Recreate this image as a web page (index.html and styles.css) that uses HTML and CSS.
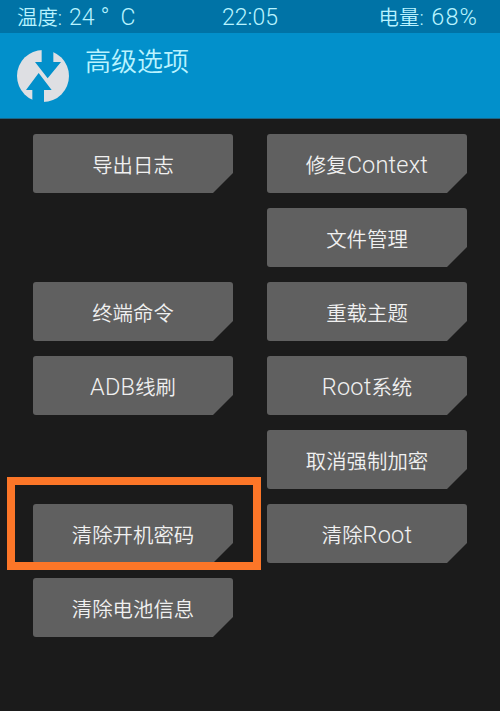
FILE: index.html
```html
<!DOCTYPE html>
<html lang="zh-CN">
<head>
    <meta charset="UTF-8">
    <meta name="viewport" content="width=device-width, initial-scale=1.0">
    <title>高级选项</title>
    <link rel="stylesheet" href="styles.css">
</head>
<body>
    <div class="status-bar">
        <span class="status-temp">温度: <span class="latin">24</span><span class="degree">°</span><span class="latin">C</span></span>
        <span class="status-time latin">22:05</span>
        <span class="status-battery">电量: <span class="latin percent">68%</span></span>
    </div>

    <div class="header">
        <svg class="logo" viewBox="0 0 156 156">
            <circle class="logo-disc" cx="78" cy="78" r="78"/>
            <!-- down arrow, then up arrow -->
            <path class="logo-arrow" d="M74 -2H109V36H132L92 85L54 36H74Z"/>
            <path class="logo-arrow" d="M65 69L104 120H81V158H46V120H27Z"/>
        </svg>
        <h1>高级选项</h1>
    </div>

    <div class="menu">
        <button class="btn left row-1">导出日志</button>
        <button class="btn right row-1">修复<span class="latin">Context</span></button>
        <button class="btn right row-2">文件管理</button>
        <button class="btn left row-3">终端命令</button>
        <button class="btn right row-3">重载主题</button>
        <button class="btn left row-4"><span class="latin">ADB</span>线刷</button>
        <button class="btn right row-4"><span class="latin">Root</span>系统</button>
        <button class="btn right row-5">取消强制加密</button>
        <div class="marked left row-6">
            <button class="btn">清除开机密码</button>
            <div class="highlight"></div>
        </div>
        <button class="btn right row-6">清除<span class="latin">Root</span></button>
        <button class="btn left row-7">清除电池信息</button>
    </div>
</body>
</html>
```

FILE: styles.css
```css
* {
    margin: 0;
    padding: 0;
    box-sizing: border-box;
}

body {
    font-family: Roboto, "Noto Sans CJK SC", sans-serif;
    font-weight: 350;
    background: #1b1b1b;
    min-height: 100vh;
}

.status-bar {
    display: grid;
    grid-template-columns: 1fr auto 1fr;
    align-items: center;
    height: 33px;
    padding: 2px 23px 0 17px;
    background: #0073a6;
    color: #b9f3ff;
    font-size: 20.4px;
    line-height: 30px;
    white-space: nowrap;
}

.status-temp {
    word-spacing: 2px;
}

.status-time {
    padding-left: 6px;
}

.status-battery {
    text-align: right;
    word-spacing: 2.5px;
}

.latin {
    font-size: 23.5px;
    font-weight: 300;
    line-height: 0;
}

.status-bar .latin {
    font-size: 23px;
}

.status-bar .percent {
    font-size: 23.5px;
    letter-spacing: 1.2px;
    margin-right: -1.2px;
}

.degree {
    display: inline-block;
    width: 26px;
    padding-left: 6px;
    font-size: 24px;
    font-weight: 300;
    line-height: 20px;
}

.header {
    display: flex;
    align-items: flex-start;
    height: 86px;
    padding: 17px 17px 0;
    background: #0290cb;
    border-bottom: 1px solid #1b6585;
}

.logo {
    width: 52px;
    height: 52px;
    margin-right: 16px;
}

.logo-disc {
    fill: #dedfe3;
}

.logo-arrow {
    fill: #0290cb;
}

h1 {
    margin-top: -7px;
    color: #b9f3ff;
    font-size: 26px;
    font-weight: 350;
    line-height: 38px;
}

.menu {
    display: grid;
    grid-template-columns: 200px 200px;
    grid-template-rows: repeat(7, 59px);
    gap: 15px 34px;
    padding: 15px 33px 0;
}

.btn {
    width: 100%;
    height: 59px;
    padding-top: 5px;
    border: none;
    border-radius: 3px;
    background: #606060;
    color: #f0f0f0;
    font-family: inherit;
    font-size: 20.4px;
    font-weight: 350;
    line-height: 30px;
    cursor: pointer;
    clip-path: polygon(0 0, 100% 0, 100% 39px, calc(100% - 20px) 100%, 0 100%);
}

.btn .latin {
    letter-spacing: 0.2px;
}

.left {
    grid-column: 1;
}

.right {
    grid-column: 2;
}

.row-1 { grid-row: 1; }
.row-2 { grid-row: 2; }
.row-3 { grid-row: 3; }
.row-4 { grid-row: 4; }
.row-5 { grid-row: 5; }
.row-6 { grid-row: 6; }
.row-7 { grid-row: 7; }

.marked {
    position: relative;
}

.highlight {
    position: absolute;
    top: -27px;
    left: -26px;
    width: 254px;
    height: 93px;
    border: 8px solid #fc7628;
    pointer-events: none;
}
```
